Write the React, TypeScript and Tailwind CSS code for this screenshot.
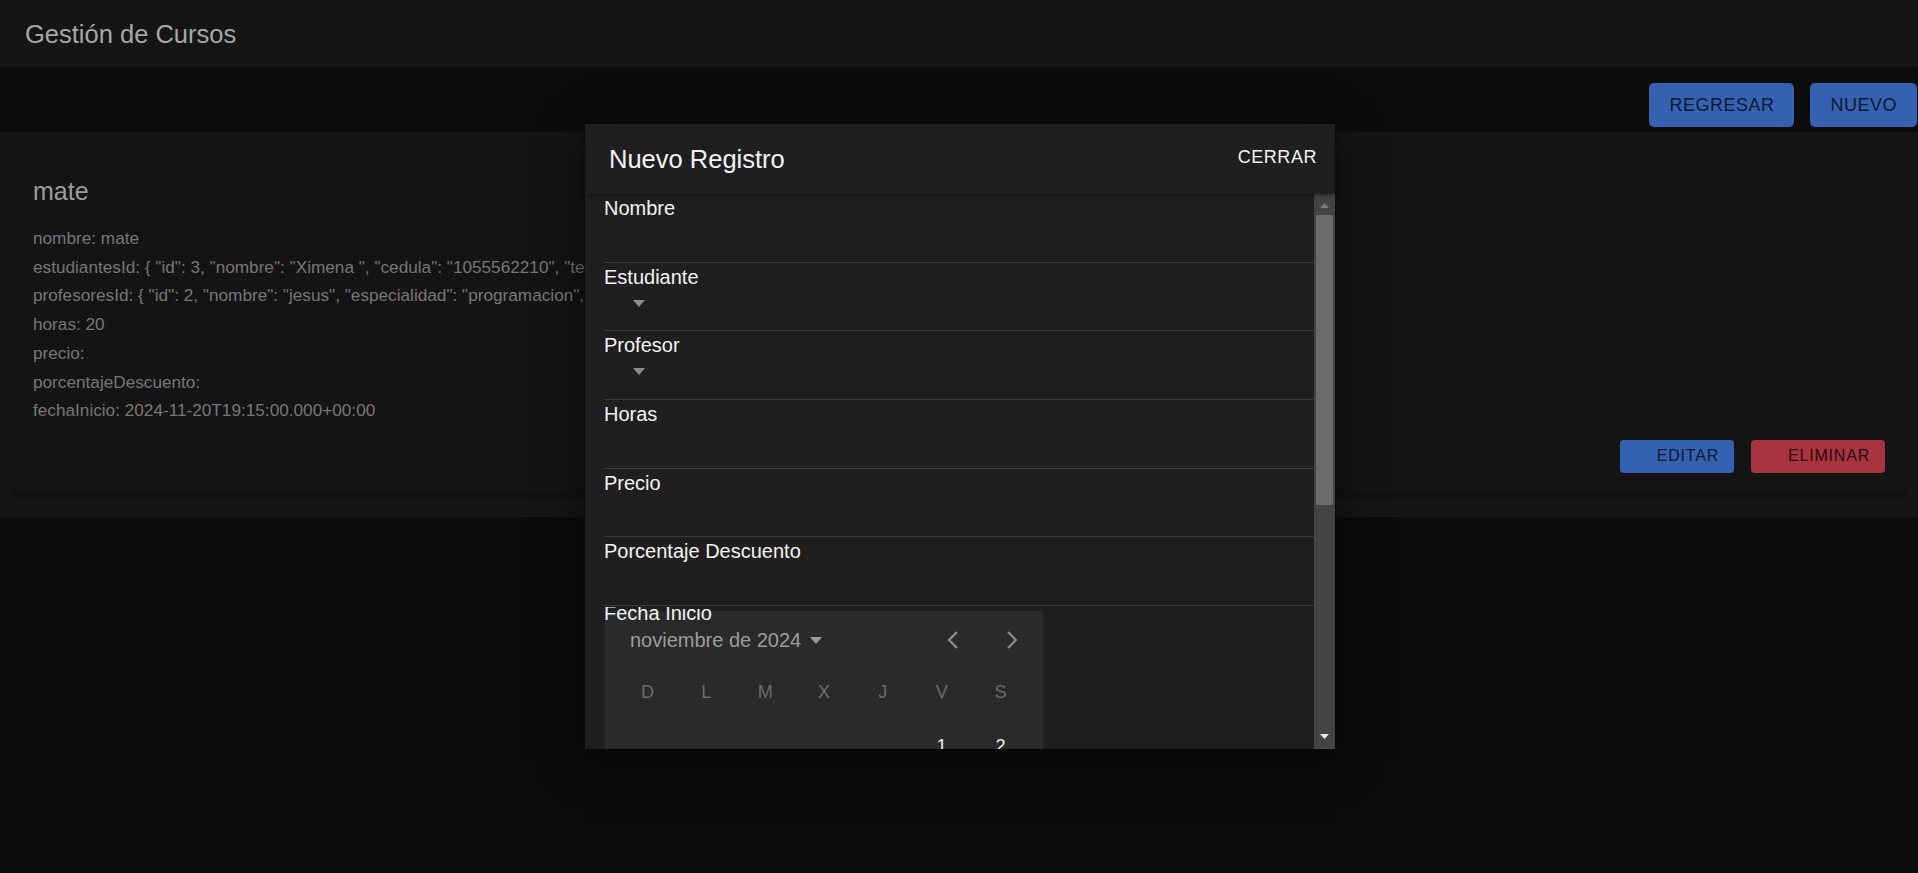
import React from 'react';

const info = [
  'nombre: mate',
  'estudiantesId: { "id": 3, "nombre": "Ximena ", "cedula": "1055562210", "telefono": "3001234567" }',
  'profesoresId: { "id": 2, "nombre": "jesus", "especialidad": "programacion", "correo": "jesus@mail.com" }',
  'horas: 20',
  'precio:',
  'porcentajeDescuento:',
  'fechaInicio: 2024-11-20T19:15:00.000+00:00',
];

const fields = [
  { label: 'Nombre', select: false },
  { label: 'Estudiante', select: true },
  { label: 'Profesor', select: true },
  { label: 'Horas', select: false },
  { label: 'Precio', select: false },
  { label: 'Porcentaje Descuento', select: false },
];

const weekDays = ['D', 'L', 'M', 'X', 'J', 'V', 'S'];

function Caret({ className }: { className: string }) {
  return (
    <svg width="12" height="7" viewBox="0 0 12 7" className={className}>
      <polygon points="0,0 12,0 6,7" fill="currentColor" />
    </svg>
  );
}

function Chevron({ dir }: { dir: 'left' | 'right' }) {
  return (
    <svg width="14" height="20" viewBox="0 0 14 20" className="text-[#8e8e8e]">
      <polyline
        points={dir === 'left' ? '11,2 3,10 11,18' : '3,2 11,10 3,18'}
        fill="none"
        stroke="currentColor"
        strokeWidth="2.2"
      />
    </svg>
  );
}

function Calendar() {
  return (
    <div className="ml-[1px] mt-[4px] w-[438px] bg-[#2a2a2a] pt-[17px] pb-[20px]">
      <div className="flex h-[24px] items-center justify-between">
        <div className="flex items-center pl-[25px] text-[20px] leading-[24px] text-[#9c9c9c]">
          <span>noviembre de 2024</span>
          <Caret className="ml-[9px] text-[#9c9c9c]" />
        </div>
        <div className="flex items-center gap-[19px] pr-[11px]">
          <div className="flex h-[40px] w-[40px] items-center justify-center">
            <Chevron dir="left" />
          </div>
          <div className="flex h-[40px] w-[40px] items-center justify-center">
            <Chevron dir="right" />
          </div>
        </div>
      </div>
      <div className="mt-[28px] grid grid-cols-7 px-[13px] text-[18px] leading-[24px] text-[#6c6c6c]">
        {weekDays.map((d) => (
          <div key={d} className="text-center">
            {d}
          </div>
        ))}
      </div>
      <div className="mt-[30px] grid grid-cols-7 px-[13px] text-[18px] leading-[24px] text-[#f2f2f2]">
        <div />
        <div />
        <div />
        <div />
        <div />
        <div className="text-center">1</div>
        <div className="text-center">2</div>
      </div>
    </div>
  );
}

function NuevoRegistroModal() {
  return (
    <div className="absolute left-[585px] top-[124px] flex h-[625px] w-[750px] flex-col bg-[#1f1f1f] shadow-[0_10px_40px_rgba(0,0,0,0.6)]">
      <div className="relative z-10 flex h-[70px] shrink-0 items-center justify-between bg-[#1f1f1f] pl-[24px] pr-[18px] shadow-[0_2px_4px_rgba(0,0,0,0.35)]">
        <h2 className="text-[25.5px] leading-[30px] text-[#f4f4f4]">Nuevo Registro</h2>
        <button className="-mt-[4px] text-[18px] tracking-[0.03em] text-[#f4f4f4]">CERRAR</button>
      </div>
      <div className="flex min-h-0 flex-1">
        <div className="min-w-0 flex-1 overflow-hidden pl-[19px]">
          {fields.map((f) => (
            <div key={f.label} className="h-[68.7px] border-b border-[#3b3b3b] pt-[2px]">
              <div className="h-[24px] text-[20px] leading-[24px] text-[#f4f4f4]">{f.label}</div>
              {f.select && (
                <div className="pl-[29px] pt-[11px]">
                  <Caret className="text-[#8c8c8c]" />
                </div>
              )}
            </div>
          ))}
          <div className="relative mt-[1px] h-[200px] overflow-hidden">
            <div className="absolute left-0 top-[-6px] z-10 text-[20px] leading-[24px] text-[#f4f4f4]">
              Fecha Inicio
            </div>
            <Calendar />
          </div>
        </div>
        <div className="flex w-[21px] shrink-0 flex-col items-center bg-[#444444]">
          <svg width="9" height="5" viewBox="0 0 9 5" className="mt-[9px] text-[#7a7a7a]">
            <polygon points="0,5 9,5 4.5,0" fill="currentColor" />
          </svg>
          <div className="mt-[7px] h-[290px] w-[17px] bg-[#6b6b6b]" />
          <div className="flex-1" />
          <svg width="9" height="5" viewBox="0 0 9 5" className="mb-[10px] text-[#e6e6e6]">
            <polygon points="0,0 9,0 4.5,5" fill="currentColor" />
          </svg>
        </div>
      </div>
    </div>
  );
}

export default function App() {
  return (
    <div className="relative h-[873px] w-full overflow-hidden bg-[#0c0c0c] font-['Liberation_Sans',Arial,sans-serif]">
      <header className="flex h-[67px] items-center bg-[#151515] pl-[25px]">
        <h1 className="text-[25.5px] leading-[30px] text-[#a7a7a7]">Gestión de Cursos</h1>
      </header>

      <div className="flex h-[65px] items-start justify-end gap-[16px] pr-[1px] pt-[16px]">
        <button className="h-[44px] rounded-[5px] bg-[#3562b0] px-[20px] text-[18px] tracking-[0.5px] text-[#0d1730]">
          REGRESAR
        </button>
        <button className="h-[44px] rounded-[5px] bg-[#3562b0] px-[20px] text-[18px] tracking-[0.5px] text-[#0d1730]">
          NUEVO
        </button>
      </div>

      <section className="bg-[#151515] px-[12px] pb-[22px]">
        <div className="rounded-b-[8px] bg-[#141414] px-[21px] pb-[22px] pt-[44px] shadow-[0_2px_2px_rgba(0,0,0,0.3)]">
          <h3 className="mb-[18px] h-[30px] text-[25px] leading-[30px] text-[#9d9d9d]">mate</h3>
          <div className="text-[17.2px] leading-[28.7px] text-[#777777]">
            {info.map((line) => (
              <p key={line} className="whitespace-nowrap">
                {line}
              </p>
            ))}
          </div>
          <div className="mt-[15px] flex justify-end gap-[17px]">
            <button className="h-[33px] rounded-[4px] bg-[#3562b0] pl-[37px] pr-[15px] text-[16px] tracking-[0.05em] text-[#0d1730]">
              EDITAR
            </button>
            <button className="h-[33px] rounded-[4px] bg-[#a7343e] pl-[37px] pr-[15px] text-[16px] tracking-[0.05em] text-[#2a0b0f]">
              ELIMINAR
            </button>
          </div>
        </div>
      </section>

      <NuevoRegistroModal />
    </div>
  );
}
